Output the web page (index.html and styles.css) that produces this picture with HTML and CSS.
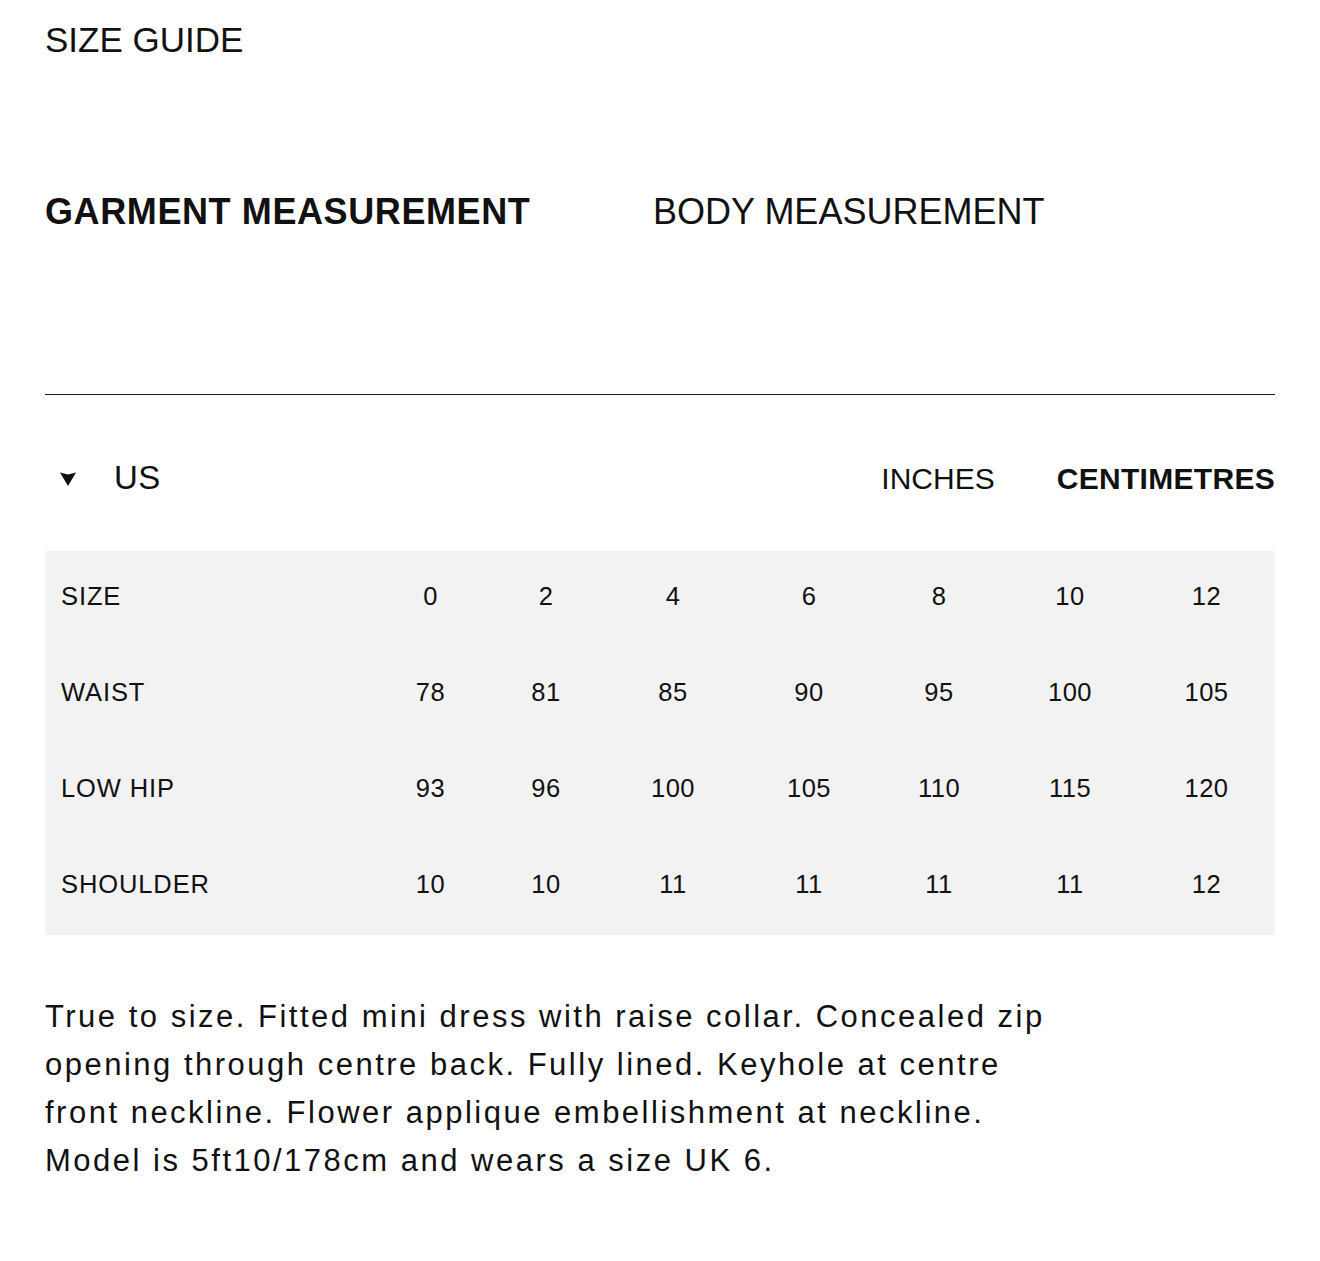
FILE: index.html
```html
<!DOCTYPE html>
<html lang="en">
<head>
<meta charset="utf-8">
<title>Size Guide</title>
<link rel="stylesheet" href="styles.css">
</head>
<body>
<main class="page">
  <h1 class="title">SIZE GUIDE</h1>
  <div class="tabs">
    <div class="tab tab-active">GARMENT MEASUREMENT</div>
    <div class="tab">BODY MEASUREMENT</div>
  </div>
  <hr class="rule">
  <div class="controls">
    <div class="region">
      <svg class="caret" width="16" height="14" viewBox="0 0 16 14" aria-hidden="true"><path d="M0 0.5 L8 2.5 L16 0.5 L8 14 Z" fill="#111"/></svg>
      <span class="region-label">US</span>
    </div>
    <div class="units">
      <span class="unit">INCHES</span>
      <span class="unit unit-active">CENTIMETRES</span>
    </div>
  </div>
  <div class="table">
    <div class="cell label">SIZE</div><div class="cell">0</div><div class="cell">2</div><div class="cell">4</div><div class="cell">6</div><div class="cell">8</div><div class="cell">10</div><div class="cell">12</div>
    <div class="cell label">WAIST</div><div class="cell">78</div><div class="cell">81</div><div class="cell">85</div><div class="cell">90</div><div class="cell">95</div><div class="cell">100</div><div class="cell">105</div>
    <div class="cell label">LOW HIP</div><div class="cell">93</div><div class="cell">96</div><div class="cell">100</div><div class="cell">105</div><div class="cell">110</div><div class="cell">115</div><div class="cell">120</div>
    <div class="cell label">SHOULDER</div><div class="cell">10</div><div class="cell">10</div><div class="cell">11</div><div class="cell">11</div><div class="cell">11</div><div class="cell">11</div><div class="cell">12</div>
  </div>
  <p class="desc">True to size. Fitted mini dress with raise collar. Concealed zip<br>opening through centre back. Fully lined. Keyhole at centre<br>front neckline. Flower applique embellishment at neckline.<br>Model is 5ft10/178cm and wears a size UK 6.</p>
</main>
</body>
</html>
```

FILE: styles.css
```css
html, body {
  margin: 0;
  padding: 0;
  background: #ffffff;
}
body {
  font-family: "Liberation Sans", Arial, sans-serif;
  color: #111111;
}
.page {
  padding: 22px 45px 40px;
}
.title {
  margin: 0;
  font-size: 35px;
  line-height: 1;
  font-weight: 400;
}
.tabs {
  display: grid;
  grid-template-columns: 608px auto;
  margin-top: 137px;
}
.tab {
  font-size: 36px;
  line-height: 1;
  font-weight: 400;
}
.tab-active {
  font-weight: 700;
  letter-spacing: 0.6px;
}
.rule {
  margin: 164px 0 0;
  border: 0;
  border-top: 1px solid #1a1a1a;
  height: 0;
}
.controls {
  display: flex;
  justify-content: space-between;
  align-items: baseline;
  margin-top: 66px;
}
.region {
  display: flex;
  align-items: baseline;
  padding-left: 15px;
}
.caret {
  margin-right: 38px;
  align-self: center;
  position: relative;
  top: 1px;
}
.region-label {
  font-size: 33px;
  line-height: 1;
  letter-spacing: 0.5px;
}
.units {
  display: flex;
  gap: 62px;
  align-items: baseline;
}
.unit {
  font-size: 30px;
  line-height: 1;
}
.unit-active {
  font-weight: 700;
  letter-spacing: 0.3px;
}
.table {
  display: grid;
  grid-template-columns: 328px 115px 116px 138px 134px 126px 136px 137px;
  grid-auto-rows: 96px;
  background: #f2f2f2;
  margin-top: 57px;
}
.cell {
  display: flex;
  align-items: center;
  justify-content: center;
  font-size: 25.5px;
  letter-spacing: 0.5px;
  padding-bottom: 6px;
}
.cell.label {
  justify-content: flex-start;
  padding-left: 16px;
  letter-spacing: 0.9px;
}
.desc {
  margin: 58px 0 0;
  font-size: 31px;
  line-height: 48px;
  letter-spacing: 2.5px;
}
```
